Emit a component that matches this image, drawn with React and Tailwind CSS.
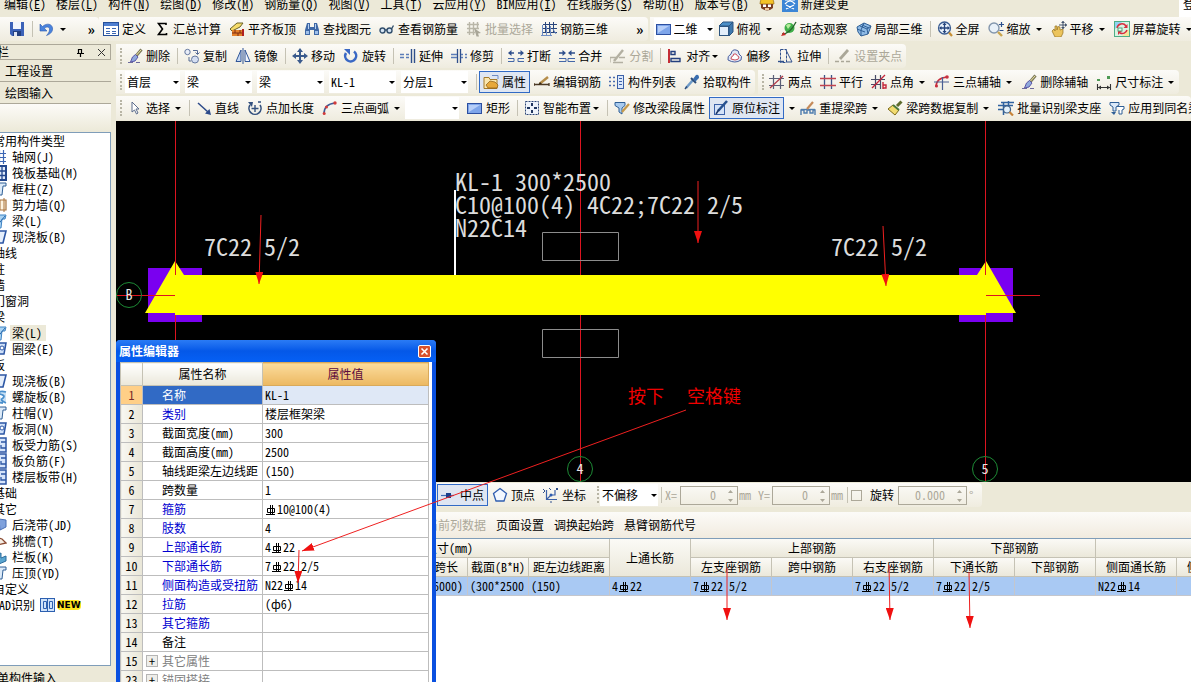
import React from "react";
import clsx from "clsx";

// stroke-only path shorthand used by the icon set
const P = ({ d, c = "#2b4f8f", w = 1, f = "none" }) => (
  <path d={d} stroke={c} strokeWidth={w} fill={f} />
);

const Brush = ({ tip = "#8fa9dc", hair = "#5b55a8" }) => (
  <>
    <P d="M14.5 1.5L9 8" c="#7d7a5c" w={3} />
    <P d="M14 2L9.5 7" c="#efe6a0" />
    <P d="M8.500 6.500L11 9L8 13L3.500 14L5.500 9Z" c={hair} f={tip} />
    <P d="M1 14.500H6M9 14.500H13" c="#6d6a9c" />
  </>
);

const FourArrows = ({ c = "#3a5a8c" }) => (
  <>
    <P d="M8 2V14M2 8H14" c={c} w={2} />
    <path d="M8 0L11 4H5ZM8 16L5 12H11ZM0 8L4 5V11ZM16 8L12 11V5Z" fill={c} />
  </>
);

const ICONS = {
  save: (
    <>
      <path d="M1 1H15V15H3L1 13Z" fill="#3c62b8" />
      <rect x="4" y="1" width="8" height="7" fill="#f3f6fc" />
      <rect x="4" y="10" width="8" height="5" fill="#24407f" />
      <rect x="5" y="11" width="3" height="4" fill="#dfe6f4" />
    </>
  ),
  undo: (
    <>
      <path d="M1 3V10H8L5.500 7.500C8 5 11 6 10.500 9C10.300 11 9 13 7.500 14.500C12 13 14 10 13.500 7C13 3 8 1.500 3.500 5.500Z" fill="#4a83dc" stroke="#2c59b0" strokeWidth=".6" />
    </>
  ),
  define: (
    <>
      <rect x=".5" y="1.500" width="15" height="13" fill="#fff" stroke="#27509a" />
      <rect x="1" y="2" width="14" height="3" fill="#4f7fd0" />
      <P d="M3 7.500H7M3 10.500H7M3 12.500H7M9 7.500H13M9 10.500H13M9 12.500H13" c="#3b66b2" />
    </>
  ),
  sigma: <P d="M12 4V2.500H4.500L8.500 8L4.500 13.500H12.500V12" c="#000" w={1.600} />,
  slab: (
    <>
      <P d="M1 8L8 2H14L11 6L3 10Z" c="#6b6228" f="#f6dc6a" />
      <rect x="3" y="9" width="10" height="6" fill="#e4812b" />
      <P d="M3 12H13M6 9V12M9 12V15M11 9V12" c="#7f2d12" />
      <path d="M13 8H15V15H13Z" fill="#b02020" />
    </>
  ),
  binoculars: (
    <>
      <path d="M3 2H6V6H10V2H13L15 9V14H10V9H6V14H1V9Z" fill="#3f68a6" />
      <path d="M2 10H5V13H2ZM11 10H14V13H11Z" fill="#9fc0ea" />
      <P d="M4.500 3V8M11.500 3V8" c="#b7d0f0" />
    </>
  ),
  glasses: (
    <>
      <circle cx="3.500" cy="9.500" r="2.500" fill="#d7e6f5" stroke="#33506e" strokeWidth="1.400" />
      <circle cx="10.500" cy="9.500" r="2.500" fill="#d7e6f5" stroke="#33506e" strokeWidth="1.400" />
      <P d="M6 9H8M12.500 8L14.500 4.500" c="#33506e" w={1.400} />
    </>
  ),
  batch: (
    <>
      <P d="M1 3.500H13M1 7.500H13M1 11.500H9M3.500 1V14M7.500 1V14M11.500 1V7" c="#b9b6a8" w={1.400} />
      <path d="M8 7L15 12L12 12.500L13 15.500L10.500 15.500Z" fill="#a9a698" />
    </>
  ),
  rebar3d: (
    <>
      <P d="M4.500 1V12M8.500 1V12M12.500 1V12M2 3.500H16M2 7.500H16M2 11.500H16" c="#29457c" />
      <P d="M1.500 4V15M5.500 5V15M9.500 5V15M12 8L15 13M0 14.500H11" c="#6d8cc4" />
    </>
  ),
  rect: (
    <>
      <rect x=".5" y="3.500" width="14" height="10" fill="#7ea5ea" stroke="#2c4fa0" />
      <path d="M2 5H13L2 12Z" fill="#b6cef8" />
    </>
  ),
  cube: (
    <>
      <P d="M1 5L5 1H15L11 5Z" c="#2d5580" f="#4b8fc7" />
      <P d="M11 5L15 1V11L11 15Z" c="#2d5580" f="#3f78ad" />
      <rect x="1.500" y="5.500" width="9" height="9" fill="#e3eefa" stroke="#2d5580" />
    </>
  ),
  orbit: (
    <>
      <circle cx="8.500" cy="7" r="5" fill="#3fae49" />
      <path d="M5 4.500Q8 2 10 4L7 8Z" fill="#b6ec9c" />
      <P d="M1 13Q9 13 15 1" c="#27642d" w={1.300} />
      <path d="M0 15L5 14L2.500 11Z" fill="#c62828" />
    </>
  ),
  local3d: (
    <>
      <P d="M1 6L8 2L15 5L12 13L5 15L2 11Z" c="#2f5f96" f="#8fbbe6" />
      <P d="M4 5L11 8L12 13M8 2L5 9L5 15M1 8L9 11M11 8L15 5M6 4L13 7" c="#2f5f96" />
    </>
  ),
  fullscreen: (
    <>
      <circle cx="7.500" cy="7" r="6" fill="#e8f1fb" stroke="#3a5c92" strokeWidth="1.300" />
      <P d="M7.500 2.500V11.500M3 7H12" c="#25447c" w={1.300} />
      <path d="M7.500 1.500L9.500 4H5.500ZM7.500 12.500L5.500 10H9.500ZM2 7L4.500 5V9ZM13 7L10.500 9V5Z" fill="#25447c" />
      <P d="M12 11.500L15 15" c="#c78f35" w={2.200} />
    </>
  ),
  zoom: (
    <>
      <circle cx="6" cy="7" r="5" fill="#e9f1f8" stroke="#8396ad" strokeWidth="1.400" />
      <P d="M10 11L14 15" c="#c9a54d" w={2.400} />
      <P d="M11 3.500H16M13.500 1V6M11.500 9.500H15.500" c="#2b4f8f" w={1.200} />
    </>
  ),
  pan: (
    <>
      <path d="M1 10L3 8L4 10V5H6V9L7 5.500L9 6V9L12 8V12L10 16H4Z" fill="#ecc45c" stroke="#94701f" strokeWidth=".7" />
      <P d="M12 0V8M8 4H16" c="#44546e" />
      <path d="M12 0L14 2H10ZM12 8L10 6H14ZM16 4L14 6V2Z" fill="#44546e" />
    </>
  ),
  spin: (
    <>
      <rect x=".5" y=".5" width="15" height="15" fill="#d9f3e4" stroke="#4fae86" />
      <path d="M1 1H8L1 8Z" fill="#8fd4f2" />
      <path d="M15 15H8L15 8Z" fill="#f6e59a" />
      <P d="M3 7A5 5 0 0 1 12 5M13 9A5 5 0 0 1 6 12" c="#d82c3c" w={1.500} />
      <path d="M13.500 3V7H9.500ZM4 14V10H8Z" fill="#d82c3c" />
      <rect x="4" y="7" width="4" height="3" fill="#e9faf0" stroke="#55a278" />
    </>
  ),
  brush: <Brush />,
  copy: (
    <>
      <circle cx="3.500" cy="4" r="2.700" fill="#e9eef8" stroke="#65789f" />
      <circle cx="11" cy="11.500" r="3.500" fill="#d5dff2" stroke="#65789f" />
      <P d="M9 2.500H13.500V6M11.500 4.500L13.500 6.500L15.500 4.500M5 9V13H7" c="#556a94" />
    </>
  ),
  mirror: (
    <>
      <P d="M6 2V13.500H1Z" c="#2f5597" f="#c5d8f4" />
      <P d="M10 2V13.500H15Z" c="#2f5597" f="#f0f5fd" />
      <P d="M8 0V16" c="#2f5597" />
    </>
  ),
  move: <FourArrows />,
  rotate: (
    <>
      <P d="M11 3.500A5.500 5.500 0 1 1 3 5" c="#3a68c4" w={2.600} />
      <path d="M1 1H7V7Z" fill="#3a68c4" />
    </>
  ),
  extend: (
    <>
      <P d="M0 6.500H4M0 9.500H4M6 6.500H9M6 9.500H9" c="#5b7cb8" w={1.600} />
      <P d="M11.500 1V15M14.500 1V15" c="#2f4f8c" w={1.400} />
    </>
  ),
  trim: (
    <>
      <P d="M6.500 1V15M9.500 1V15" c="#2f4f8c" w={1.300} />
      <P d="M0 6.500H6M0 9.500H6M10 6.500H12M10 9.500H12M14 6.500H16M14 9.500H16" c="#5b7cb8" w={1.300} />
    </>
  ),
  break: (
    <>
      <P d="M0 10.500H6V13.500H0M16 10.500H10V13.500H16" c="#4467a8" />
      <P d="M1 5H6M15 5H10" c="#2f4f8c" w={1.400} />
      <path d="M0 5L3.500 2V8ZM16 5L12.500 8V2Z" fill="#2f4f8c" />
    </>
  ),
  merge: (
    <>
      <P d="M0 10.500H7V13.500H0M16 10.500H9V13.500H16" c="#4467a8" />
      <P d="M0 5H5M16 5H11" c="#2f4f8c" w={1.400} />
      <path d="M7 5L3.500 8V2ZM9 5L12.500 2V8Z" fill="#2f4f8c" />
    </>
  ),
  split: (
    <>
      <P d="M0 14.500V9.500H6M9 9.500H15M3 14.500H13" c="#b3b0a2" w={1.300} />
      <P d="M4 13L13 2" c="#b3b0a2" w={2.400} />
    </>
  ),
  align: (
    <>
      <P d="M2 1V15" c="#c42e36" w={2} />
      <P d="M4 3.500H8V6.500H4ZM4 10.500H13V13.500H4Z" c="#24407f" w={1.400} />
    </>
  ),
  offset: (
    <>
      <P d="M1 12Q0 8 4 6Q5 1 9 2Q12 2 12 6Q16 8 14 12Q8 16 1 12Z" c="#4a5f9f" f="#dfe6f5" />
      <P d="M4 11Q4 8 6 8Q6 5 9 6Q10 8 12 9Q12 12 8 12Z" c="#cc5060" f="#fff" />
    </>
  ),
  stretch: (
    <>
      <path d="M2.500 1.500H8.500V14.500H2.500Z" fill="none" stroke="#2f4f8c" strokeDasharray="3 1" />
      <P d="M8 2L14 14H9" c="#2f4f8c" />
      <P d="M0 13.500H6" c="#2f4f8c" w={1.400} />
    </>
  ),
  grips: (
    <>
      <P d="M5 11L13 2" c="#aaa798" w={2.800} />
      <P d="M0 13.500H4M6 13.500H9M11 13.500H15" c="#aaa798" w={1.600} />
    </>
  ),
  props: (
    <>
      <P d="M1 3.500H6L7 5.500H14V14.500H1Z" c="#a57a2a" f="#fbe7ae" />
      <path d="M3 11L7 7L12 8L15 11L14 14H5Z" fill="#e7a83a" stroke="#8a5a14" strokeWidth=".7" />
      <P d="M9 1.500H15V5" c="#6f8cc4" />
    </>
  ),
  editbar: (
    <>
      <P d="M0 10.500H15M0 12V9M15 12V9" c="#4b3924" w={1.300} />
      <P d="M6 9.500L14 3" c="#b58d4a" w={2.400} />
      <path d="M4 11L6 8L8 10Z" fill="#3b2a14" />
    </>
  ),
  list: (
    <>
      <P d="M0 3.500H2M4 3.500H6M0 7.500H2M4 7.500H6M0 11.500H2M4 11.500H6" c="#4a6caf" w={1.600} />
      <rect x="8.500" y="1.500" width="6" height="13" fill="#dbe8fb" stroke="#3c61a8" />
      <P d="M10 4.500H13M10 7.500H13M10 10.500H13" c="#3c61a8" />
    </>
  ),
  dropper: (
    <>
      <P d="M2 14L9 6" c="#6f9bc8" w={2.600} />
      <P d="M1 15L3 12.500" c="#2c4c79" w={1.400} />
      <P d="M7 4L12 9" c="#2c4c79" w={2} />
      <path d="M9 5L12 1Q15 0 15 4L11.500 7.500Z" fill="#3a6eaf" />
    </>
  ),
  axes2: (
    <>
      <P d="M4.500 1V15M11.500 1V15M0 4.500H15M0 11.500H15" c="#5a5f77" w={1.200} />
      <P d="M1 14L14 2" c="#b23a48" w={1.200} />
    </>
  ),
  parallel: (
    <>
      <P d="M4.500 1V15M11.500 1V15" c="#3b5488" w={1.300} />
      <P d="M0 4.500H16M0 11.500H16" c="#c24450" w={1.300} />
    </>
  ),
  ptangle: (
    <>
      <P d="M4.500 1V15M9.500 1V15M0 5.500H14M0 10.500H10" c="#474b66" w={1.200} />
      <P d="M1 14L14 1M12 8V15M12 11H15V14H12" c="#c4253a" w={1.400} />
    </>
  ),
  arcaxis: (
    <>
      <P d="M2 13Q2 4 13 3" c="#c9303f" w={1.600} />
      <P d="M0 8H15M8.500 3V16" c="#4a5f93" w={1.200} />
      <circle cx="13" cy="3" r="1.800" fill="#c9303f" />
      <circle cx="2.500" cy="12" r="1.500" fill="#c9303f" />
    </>
  ),
  dim: (
    <>
      <P d="M1.500 10V16M14.500 10V16M2 13.500H14" c="#333" w={1.100} />
      <path d="M2 13.500L5 11.500V15.500ZM14 13.500L11 15.500V11.500Z" fill="#333" />
      <path d="M1 5H4V7H1ZM11 2H14V5H11Z" fill="#4e9a54" />
    </>
  ),
  cursor: <P d="M5 2L12 9L9 9L11 13L9.500 14L7.500 10L5 12Z" c="#5c6d8c" f="#fff" />,
  line: (
    <>
      <P d="M2 3L12 12" c="#2c4a8a" w={1.500} />
      <path d="M15 15L9 13.500L13.500 9Z" fill="#2c4a8a" />
    </>
  ),
  addlen: (
    <>
      <P d="M3 5A6 6 0 1 0 13 5" c="#33507e" w={1.600} />
      <path d="M1 2L6 2L5 7Z" fill="#33507e" />
      <P d="M8 5V12M4.500 8.500H11.500M11 2H14" c="#33507e" w={1.400} />
    </>
  ),
  arc: (
    <>
      <P d="M2 14Q2 4 13 3" c="#3d5a96" w={1.600} />
      <circle cx="13" cy="3" r="1.700" fill="#d23c3c" />
      <circle cx="4.500" cy="7" r="1.500" fill="#d23c3c" />
      <circle cx="2.200" cy="13.500" r="1.500" fill="#d23c3c" />
    </>
  ),
  smart: (
    <>
      <rect x="1.500" y="1.500" width="13" height="13" fill="#eef3fb" stroke="#2d4678" strokeDasharray="2 1" />
      <path d="M7 3H9V6H7ZM7 10H9V13H7ZM3 7H6V9H3ZM10 7H13V9H10Z" fill="#1f355f" />
    </>
  ),
  editseg: (
    <>
      <P d="M1 2.500H11V5.500L8 8V14L5 12V8L1 5.500Z" c="#2f5f96" f="#a9cbee" />
      <P d="M8 12L15 4" c="#c59a4c" w={2.200} />
    </>
  ),
  annotate: (
    <>
      <rect x="1.500" y="4.500" width="10" height="10" fill="#d4e2f8" stroke="#3c61a8" />
      <P d="M5 11L14 1" c="#27518f" w={2.600} />
      <P d="M3 14L6 9.500" c="#1f3866" w={1.500} />
    </>
  ),
  respan: (
    <>
      <P d="M1 15V10H4V13H7V10H10V13H13V10H15V15" c="#4f7dae" w={1.400} />
      <P d="M1 9.500H15" c="#4f7dae" w={1.400} />
      <P d="M7 9L13 2" c="#c58a5a" w={2.200} />
    </>
  ),
  goldbrush: (
    <>
      <P d="M14.500 1.500L10 6" c="#5f6c2d" w={3} />
      <P d="M6 5L12 10L8 15L1 9Z" c="#7d6a18" f="#f3dc70" />
      <P d="M6 5L12 10" c="#4c7a3b" w={2} />
    </>
  ),
  identify: (
    <>
      <P d="M0 5.500H15M3 2.500H16M0 9.500H7M5.500 2V15M10.500 1V6" c="#2f62a0" w={1.500} />
      <circle cx="9" cy="9.500" r="3.500" fill="#e3f1fb" stroke="#3c5f88" strokeWidth="1.200" />
      <P d="M11.500 12L15 15.500" c="#c78338" w={2.200} />
    </>
  ),
  apply: (
    <>
      <P d="M1 2.500H10V5L7 7V11H4V7L1 5Z" c="#2f5f96" f="#dbe9f8" />
      <P d="M8 6.500H15V9L13 10V14H10V10" c="#2f5f96" f="#fff" />
      <path d="M2 12L7 12L5 15Z" fill="#2f5f96" />
    </>
  ),
  mid: (
    <>
      <P d="M0 8.500H13" c="#3d6bb5" w={1.200} />
      <rect x="5" y="6" width="5" height="5" fill="#1b3f8b" />
    </>
  ),
  vertex: <P d="M8 1.500L14.500 6.500L12 14H4L1.500 6.500Z" c="#2f5db0" w={1.300} f="#f3f8ff" />,
  coord: (
    <>
      <P d="M3.500 3V12.500H14M4 12L8 8H12V3" c="#3c61a8" w={1.200} />
      <P d="M0 2L2 4L0 6M6 1L8 3M13 1L15 3M15 1L13 3M7 15H9" c="#2f4f8c" />
      <circle cx="8" cy="8" r="1.500" fill="#2f5db0" />
    </>
  ),
  helmet: (
    <>
      <path d="M1 8Q1 1 8 1Q15 1 15 8Z" fill="#f4c228" stroke="#9a6b12" strokeWidth=".7" />
      <path d="M2 8H14V12Q8 17 2 12Z" fill="#7b3e22" />
      <path d="M4 8.500H7V11H4ZM9 8.500H12V11H9Z" fill="#fff" />
      <path d="M6 12H10V14H6Z" fill="#f3c9a0" />
    </>
  ),
  change: (
    <>
      <rect width="16" height="16" fill="#3c86d6" />
      <P d="M3 4H13M3 8Q8 2 13 8M4 13L12 9M4 9L12 13M8 2V4" c="#fff" w={1.200} />
    </>
  ),
  grid: <P d="M3.500 1V15M8.500 1V15M12.500 1V15M0 4.500H15M0 8.500H15M0 12.500H15" c="#3c66b4" w={1.200} />,
  raft: (
    <>
      <rect x="1" y="1" width="14" height="14" fill="#dfeafa" stroke="#24478c" strokeWidth="2" />
      <P d="M1 6H15M1 10.500H15M6 1V15M11 1V15" c="#24478c" w={1.300} />
    </>
  ),
  column: <P d="M2 2H15V5H12L11 14H7V6H2Z" c="#2f5f96" f="#dceaf8" />,
  wall: (
    <>
      <P d="M1 3H15V13H1Z" c="#a8733c" f="#fdf3e0" w={1.200} />
      <P d="M13 1V15M9 3V13" c="#a8733c" />
    </>
  ),
  beam: (
    <>
      <P d="M1 2H15L14 6H11L10 15H4Z" c="#3d83c4" f="#a9d2f2" />
      <P d="M5 14L14 3" c="#2e6dae" />
    </>
  ),
  plate: <P d="M2 2H15L12 14H1Z" c="#2c56a4" w={1.600} f="#e6effb" />,
  spiral: <P d="M15 3Q8 1 8 5Q15 6 12 9Q8 11 15 14M8 5L4 13L12 14" c="#4a8fcc" w={1.800} f="#c9e1f5" />,
  ring: (
    <>
      <P d="M3 2H15L13 13H1Z" c="#2c56a4" w={1.500} f="#cfe0f8" />
      <circle cx="11" cy="7" r="2" fill="#fff" stroke="#2c56a4" />
    </>
  ),
  band: (
    <>
      <rect x="1" y="1" width="14" height="14" fill="#d6e4fa" stroke="#2c56a4" strokeWidth="1.500" />
      <P d="M10 5H15M10 8V11H15" c="#2c56a4" w={1.300} />
    </>
  ),
  strip: <P d="M8 2L15 3V10L9 13Z" c="#4a6fb4" f="#7fa1dc" />,
  eave: <P d="M4 4L11 6L15 10L6 12" c="#8a4a32" w={1.300} f="#f4ede4" />,
  rail: <P d="M5 6L10 4V9L15 7V12L8 15Z" c="#2b6c9e" f="#5ba5cf" />,
  book: (
    <>
      <rect x=".5" y="1.500" width="14" height="13" fill="#cfe2fa" stroke="#2c5fb0" />
      <P d="M3.500 4.500H6.500V11.500H3.500ZM9.500 4.500H12.500V11.500H9.500ZM7.500 2V14" c="#2c5fb0" />
    </>
  ),
};

const Ico = ({ name }) => (
  <svg viewBox="0 0 16 16" className="h-4 w-4 shrink-0" aria-hidden="true">
    {ICONS[name]}
  </svg>
);

const Caret = ({ tight }) => (
  <svg
    viewBox={tight ? "3 0 9 16" : "0 0 12 16"}
    className={clsx("h-4 shrink-0", tight ? "w-[9px]" : "w-3")}
    aria-hidden="true"
  >
    <path d="M5 7H11L8 10Z" fill="#000" />
  </svg>
);

const Sep = () => <span className="ml-[3px] mr-[2px] h-4 w-px shrink-0 bg-[#c5c2b4]" />;

const Grip = () => (
  <span className="ml-1 mr-px h-4 w-[2px] shrink-0 border-l-2 border-dotted border-[#b8b5a5]" />
);

const More = () => <span className="text-[14px] leading-4 font-bold">»</span>;

const Tool = ({ icon, label, caret, active, disabled }) => (
  <button
    type="button"
    disabled={disabled}
    className={clsx(
      "flex h-[22px] shrink-0 items-center gap-[3px] border px-[3px]",
      active ? "border-[#316ac5] bg-[#dfe6f2]" : "border-transparent",
      disabled ? "text-[#aca899]" : "text-black"
    )}
  >
    <Ico name={icon} />
    <span className="flex items-center">
      {label}
      {caret && <Caret tight={caret === "tight"} />}
    </span>
  </button>
);

const Combo = ({ value, label, width, icon }) => (
  <div className={clsx("flex h-[22px] shrink-0 items-center gap-[2px] bg-white pl-[2px]", width)}>
    {icon && <Ico name={icon} />}
    <select aria-label={label} defaultValue={value} className="min-w-0 flex-1 appearance-none bg-transparent outline-none">
      <option>{value}</option>
    </select>
    <Caret tight />
  </div>
);

const Strip = ({ children, className }) => (
  <div
    className={clsx(
      "flex h-6 shrink-0 items-center rounded-r-sm bg-linear-to-b from-[#fcfbf8] to-[#efecdf]",
      className
    )}
  >
    {children}
  </div>
);

const MENUS = [
  ["编辑", "E"], ["楼层", "L"], ["构件", "N"], ["绘图", "D"], ["修改", "M"], ["钢筋量", "Q"], ["视图", "V"],
  ["工具", "T"], ["云应用", "Y"], ["BIM应用", "I"], ["在线服务", "S"], ["帮助", "H"], ["版本号", "B"],
];

const MenuBar = () => (
  <nav className="flex h-[17px] shrink-0 items-end gap-[10px] overflow-hidden pl-1">
    {MENUS.map(([name, key]) => (
      <button key={key} type="button" className="h-[26px] shrink-0 leading-4">
        {name}(<u>{key}</u>)
      </button>
    ))}
    <div className="flex h-[26px] shrink-0 items-center gap-[7px]">
      <Ico name="helmet" />
      <button type="button" className="flex items-center gap-[3px] leading-4">
        <Ico name="change" />
        新建变更
      </button>
    </div>
    <button type="button" className="-mr-5 ml-auto h-[26px] shrink-0 bg-white px-1 leading-4">登录</button>
  </nav>
);

const MainToolbar = () => (
  <div className="flex h-[26px] shrink-0 items-start overflow-hidden">
    <Strip className="w-[99px] pl-[5px]">
      <button type="button" aria-label="保存" className="px-1"><Ico name="save" /></button>
      <Sep />
      <button type="button" aria-label="撤销" className="flex items-center px-1"><Ico name="undo" /><Caret /></button>
      <span className="ml-auto pr-1"><More /></span>
    </Strip>
    <Strip>
      <Tool icon="define" label="定义" />
      <Tool icon="sigma" label="汇总计算" />
      <Tool icon="slab" label="平齐板顶" />
      <Tool icon="binoculars" label="查找图元" />
      <Tool icon="glasses" label="查看钢筋量" />
      <Tool icon="batch" label="批量选择" disabled />
      <Tool icon="rebar3d" label="钢筋三维" />
      <span className="pr-1 pl-6"><More /></span>
    </Strip>
    <Strip className="ml-[2px] pl-1">
      <Combo icon="rect" value="二维" label="视图模式" width="w-[60px]" />
      <Tool icon="cube" label="俯视" caret />
      <Tool icon="orbit" label="动态观察" />
      <Tool icon="local3d" label="局部三维" />
      <Sep />
      <Tool icon="fullscreen" label="全屏" />
      <Tool icon="zoom" label="缩放" caret />
      <Tool icon="pan" label="平移" caret />
      <Tool icon="spin" label="屏幕旋转" caret />
    </Strip>
  </div>
);

const EditToolbars = () => (
  <div className="flex shrink-0 flex-col items-start gap-[2px] py-px">
    <Strip>
      <Grip />
      <Tool icon="brush" label="删除" />
      <Sep />
      <Tool icon="copy" label="复制" />
      <Tool icon="mirror" label="镜像" />
      <Sep />
      <Tool icon="move" label="移动" />
      <Tool icon="rotate" label="旋转" />
      <Sep />
      <Tool icon="extend" label="延伸" />
      <Tool icon="trim" label="修剪" />
      <Sep />
      <Tool icon="break" label="打断" />
      <Tool icon="merge" label="合并" />
      <Tool icon="split" label="分割" disabled />
      <Sep />
      <Tool icon="align" label="对齐" caret="tight" />
      <Tool icon="offset" label="偏移" />
      <Tool icon="stretch" label="拉伸" />
      <Sep />
      <Tool icon="grips" label="设置夹点" disabled />
    </Strip>
    <div className="flex gap-[3px]">
      <Strip>
        <Grip />
        <div className="flex gap-[5px] px-[5px] pl-[2px]">
          <Combo value="首层" label="楼层" width="w-[55px]" />
          <Combo value="梁" label="构件大类" width="w-[67px]" />
          <Combo value="梁" label="构件类型" width="w-[67px]" />
          <Combo value="KL-1" label="构件" width="w-[67px]" />
          <Combo value="分层1" label="分层" width="w-[67px]" />
        </div>
        <Sep />
        <Tool icon="props" label="属性" active />
        <Tool icon="editbar" label="编辑钢筋" />
        <Tool icon="list" label="构件列表" />
        <Tool icon="dropper" label="拾取构件" />
      </Strip>
      <Strip>
        <Grip />
        <Tool icon="axes2" label="两点" />
        <Tool icon="parallel" label="平行" />
        <Tool icon="ptangle" label="点角" caret />
        <Tool icon="arcaxis" label="三点辅轴" caret />
        <Tool icon="brush" label="删除辅轴" />
        <Tool icon="dim" label="尺寸标注" caret />
      </Strip>
    </div>
    <Strip>
      <Grip />
      <Tool icon="cursor" label="选择" caret />
      <Sep />
      <Tool icon="line" label="直线" />
      <Tool icon="addlen" label="点加长度" />
      <Tool icon="arc" label="三点画弧" caret />
      <div className="pr-1">
        <Combo value="" label="弧类型" width="w-[54px]" />
      </div>
      <Tool icon="rect" label="矩形" />
      <Sep />
      <Tool icon="smart" label="智能布置" caret="tight" />
      <Sep />
      <Tool icon="editseg" label="修改梁段属性" />
      <Tool icon="annotate" label="原位标注" active />
      <Caret />
      <Tool icon="respan" label="重提梁跨" caret />
      <Tool icon="goldbrush" label="梁跨数据复制" caret />
      <Tool icon="identify" label="批量识别梁支座" />
      <Tool icon="apply" label="应用到同名梁" />
    </Strip>
  </div>
);

const TREE = [
  { label: "常用构件类型" },
  { label: "轴网(J)", icon: "grid" },
  { label: "筏板基础(M)", icon: "raft" },
  { label: "框柱(Z)", icon: "column" },
  { label: "剪力墙(Q)", icon: "wall" },
  { label: "梁(L)", icon: "beam" },
  { label: "现浇板(B)", icon: "plate" },
  { label: "轴线" },
  { label: "柱" },
  { label: "墙" },
  { label: "门窗洞" },
  { label: "梁" },
  { label: "梁(L)", icon: "beam", selected: true },
  { label: "圈梁(E)", icon: "ring" },
  { label: "板" },
  { label: "现浇板(B)", icon: "plate" },
  { label: "螺旋板(B)", icon: "spiral" },
  { label: "柱帽(V)", icon: "column" },
  { label: "板洞(N)", icon: "ring" },
  { label: "板受力筋(S)", icon: "band" },
  { label: "板负筋(F)", icon: "band" },
  { label: "楼层板带(H)", icon: "band" },
  { label: "基础" },
  { label: "其它" },
  { label: "后浇带(JD)", icon: "strip" },
  { label: "挑檐(T)", icon: "eave" },
  { label: "栏板(K)", icon: "rail" },
  { label: "压顶(YD)", icon: "column" },
  { label: "自定义" },
  { label: "CAD识别", isNew: true },
];

const PanelButton = ({ children }) => (
  <button type="button" className="flex h-[22px] shrink-0 items-center border-b border-[#aca899] bg-[#ece9d8] pl-[5px]">
    {children}
  </button>
);

const Sidebar = () => (
  <aside className="flex w-[111px] shrink-0 flex-col overflow-hidden">
    <div className="mt-px flex h-4 shrink-0 items-center border border-[#aca899]">
      <span className="-ml-1 flex-1">栏</span>
      <svg viewBox="0 0 9 9" className="mr-3 h-[9px] w-[9px]" aria-hidden="true">
        <P d="M2.500 1V5.500M1 5.500H8M2.500 1.500H6M5.500 1V5.500M4.500 6V9" c="#000" w={1.200} />
      </svg>
      <svg viewBox="0 0 9 9" className="mr-1 h-[9px] w-[9px]" aria-hidden="true">
        <P d="M1 1L8 8M8 1L1 8" c="#333" />
      </svg>
    </div>
    <PanelButton>工程设置</PanelButton>
    <PanelButton>绘图输入</PanelButton>
    <div className="h-7 shrink-0 bg-linear-to-b from-[#fcfbf8] to-[#ece9d8]" />
    <ul className="flex-1 border-t border-r border-b border-[#7f9db9] bg-white">
      {TREE.map((node, i) => (
        <li key={i} className="-ml-[9px] flex h-4 items-center gap-[3px]">
          {node.icon && <Ico name={node.icon} />}
          <span className={clsx("px-[2px] leading-4 whitespace-nowrap", node.selected && "bg-[#ece9d8] pr-1")}>
            {node.label}
          </span>
          {node.isNew && (
            <>
              <Ico name="book" />
              <span className="-ml-[2px] rounded-sm bg-[#ffe620] font-['DejaVu_Sans',sans-serif] text-[9px] leading-[10px] font-bold">
                NEW
              </span>
            </>
          )}
        </li>
      ))}
    </ul>
    <div className="h-4 shrink-0">
      <button type="button" className="-ml-[3px] mt-1 leading-4">单构件输入</button>
    </div>
  </aside>
);

const AxisMark = ({ x, y, children }) => (
  <g>
    <circle cx={x} cy={y} r="12.500" fill="none" stroke="#1d8a35" />
    <text x={x} y={y + 5} textAnchor="middle" fontSize="14" fill="#e6e6e6">{children}</text>
  </g>
);

// drawn in window coordinates, shifted to the view's own origin
const BeamView = () => (
  <div className="min-h-0 flex-1 overflow-hidden bg-black">
    <svg className="block h-full w-full" role="img" aria-label="KL-1">
      <g transform="translate(-116 -121)">
        <path d="M148 268H202V322H148ZM959 268H1013V322H959Z" fill="#7a00f0" />
        <path d="M175.500 121V482M580.500 121V482M985.500 121V482" stroke="#dc1420" />
        <path d="M175 261L184 275H977L986 261L1016 313H986V315H175V313H145Z" fill="#ffff00" />
        <path d="M175.500 261V275M985.500 261V275M116 295.500H175M986 295.500H1040" stroke="#dc1420" />
        <path d="M542.500 232.500H618.500V260.500H542.500ZM542.500 329.500H618.500V357.500H542.500Z" fill="none" stroke="#8c8c8c" />
        <path d="M455 190V275" stroke="#fff" strokeWidth="2" />
        <g fill="#dcdcdc" fontSize="24" className="whitespace-pre">
          <text x="455" y="191">KL-1 300*2500</text>
          <text x="455" y="214">C10@100(4) 4C22;7C22 2/5</text>
          <text x="455" y="237">N22C14</text>
          <text x="204" y="256">7C22 5/2</text>
          <text x="831" y="256">7C22 5/2</text>
        </g>
        <AxisMark x={129} y={295}>B</AxisMark>
        <AxisMark x={580} y={469}>4</AxisMark>
        <AxisMark x={985} y={469}>5</AxisMark>
        <g fill="#f00000" fontSize="18" fontWeight="300">
          <text x="628" y="403">按下</text>
          <text x="687" y="403">空格键</text>
        </g>
      </g>
    </svg>
  </div>
);

// HRB400 bar sign
const Bar = () => (
  <svg viewBox="0 0 12 12" className="inline-block h-3 w-3 align-[-2px]" role="img" aria-label="三级钢">
    <path d="M2.500 4.500H9.500V8.500H2.500ZM5.500 1V11M7.500 1V11M1 10.500H10" fill="none" stroke="#000" />
  </svg>
);

const PROPERTIES = [
  { no: 1, name: "名称", value: "KL-1" },
  { no: 2, name: "类别", value: "楼层框架梁", tone: "link" },
  { no: 3, name: "截面宽度(mm)", value: "300" },
  { no: 4, name: "截面高度(mm)", value: "2500" },
  { no: 5, name: "轴线距梁左边线距", value: "(150)" },
  { no: 6, name: "跨数量", value: "1" },
  { no: 7, name: "箍筋", value: <><Bar />10@100(4)</>, tone: "link" },
  { no: 8, name: "肢数", value: "4", tone: "link" },
  { no: 9, name: "上部通长筋", value: <>4<Bar />22</>, tone: "link" },
  { no: 10, name: "下部通长筋", value: <>7<Bar />22 2/5</>, tone: "link" },
  { no: 11, name: "侧面构造或受扭筋", value: <>N22<Bar />14</>, tone: "link" },
  { no: 12, name: "拉筋", value: "(ф6)", tone: "link" },
  { no: 13, name: "其它箍筋", value: "", tone: "link" },
  { no: 14, name: "备注", value: "" },
  { no: 15, name: "其它属性", value: "", tone: "group" },
  { no: 23, name: "锚固搭接", value: "", tone: "group" },
];

const PropertyWindow = () => (
  <section className="absolute top-[297px] bottom-0 left-0 z-10 flex w-[320px] flex-col overflow-hidden rounded-t-sm bg-[#0a50e0]">
    <header className="flex h-[22px] shrink-0 items-center justify-between bg-linear-to-b from-[#2a7bf5] via-[#0458e8] to-[#0560f5] pr-[5px] pl-[3px]">
      <h2 className="font-bold text-white">属性编辑器</h2>
      <button type="button" aria-label="关闭" className="flex h-[13px] w-[13px] items-center justify-center rounded-[2px] border border-white bg-[#d9512c]">
        <svg viewBox="0 0 9 9" className="h-[9px] w-[9px]" aria-hidden="true">
          <P d="M1.500 1.500L7.500 7.500M7.500 1.500L1.500 7.500" c="#fff" w={1.600} />
        </svg>
      </button>
    </header>
    <div className="mx-1 bg-white pr-[3px]">
      <table className="w-full table-fixed border-collapse">
        <colgroup>
          <col className="w-[22px]" />
          <col className="w-[120px]" />
          <col />
        </colgroup>
        <thead>
          <tr className="h-[23px]">
            <th className="border border-[#c5c2b4] bg-linear-to-b from-white to-[#ebe8da]" />
            <th className="border border-[#c5c2b4] bg-linear-to-b from-white to-[#ebe8da] font-normal">属性名称</th>
            <th className="border border-[#d9a95a] bg-linear-to-b from-[#fbdc9c] to-[#ecb860] font-normal text-[#5c0a3c]">属性值</th>
          </tr>
        </thead>
        <tbody>
          {PROPERTIES.map(({ no, name, value, tone }) => (
            <tr key={no} className="h-[19px]">
              <td className={clsx("border border-[#bdbdbd] p-0 text-center leading-4", no === 1 ? "bg-[#ffcf87] text-[#7a2a2a]" : "bg-linear-to-r from-[#f8f7f1] to-[#e9e6d7]")}>
                {no}
              </td>
              <td
                className={clsx(
                  "overflow-hidden border border-[#bdbdbd] p-0 leading-4 whitespace-nowrap",
                  no === 1 && "bg-[#316ac5] text-white",
                  tone === "link" && "text-[#0000d0]",
                  tone === "group" && "text-[#808080]"
                )}
              >
                <span className="flex items-center">
                  <span className="flex w-[19px] shrink-0 pl-[3px]">
                    {tone === "group" && (
                      <button type="button" aria-label={`展开${name}`} className="flex h-[12px] w-[12px] items-center justify-center border border-[#b5b5b5] bg-[#eeeeea] leading-[10px] text-black">
                        +
                      </button>
                    )}
                  </span>
                  {name}
                </span>
              </td>
              <td className={clsx("border border-[#bdbdbd] py-0 pr-0 pl-[2px] leading-4 whitespace-nowrap", no === 1 && "bg-[#dfe8f6]")}>
                {value}
              </td>
            </tr>
          ))}
        </tbody>
      </table>
    </div>
  </section>
);

const Spin = ({ id, value, width }) => (
  <div className={clsx("flex h-[19px] shrink-0 items-center border border-[#aca899] text-[#aca899]", width)}>
    <input id={id} disabled defaultValue={value} className="min-w-0 flex-1 bg-transparent pr-[10px] text-right" />
    <svg viewBox="0 0 9 15" className="mr-[2px] h-[15px] w-[9px] shrink-0" aria-hidden="true">
      <path d="M2 5L4.500 2L7 5ZM2 11L4.500 14L7 11Z" fill="#aca899" />
    </svg>
  </div>
);

const SnapBar = () => (
  <div className="flex h-[30px] shrink-0 pt-px pl-[321px]">
    <Strip>
      <Tool icon="mid" label="中点" active />
      <Tool icon="vertex" label="顶点" />
      <Tool icon="coord" label="坐标" />
      <span className="pl-[3px]"><Grip /></span>
      <Combo value="不偏移" label="偏移方式" width="w-[58px]" />
      <Sep />
      <label htmlFor="dx" className="shrink-0 pr-[3px] pl-px text-[#aca899]">X=</label>
      <Spin id="dx" value="0" width="w-[58px]" />
      <span className="w-5 shrink-0 pl-px text-[#aca899]">mm</span>
      <label htmlFor="dy" className="shrink-0 pr-[2px] text-[#aca899]">Y=</label>
      <Spin id="dy" value="0" width="w-[58px]" />
      <span className="shrink-0 px-px text-[#aca899]">mm</span>
      <Sep />
      <input id="rot" type="checkbox" className="mr-2 ml-px h-[11px] w-[11px] shrink-0 appearance-none border border-[#aca899]" />
      <label htmlFor="rot" className="shrink-0 pr-1">旋转</label>
      <Spin id="angle" value="0.000" width="w-[69px]" />
      <label htmlFor="angle" className="shrink-0 pr-2 pl-[2px] text-[#aca899]">°</label>
    </Strip>
  </div>
);

const HEAD = "border-r border-b border-[#c5c2b4] bg-linear-to-b from-[#fbfaf6] to-[#ebe8da] p-0 font-normal whitespace-nowrap overflow-hidden";

const SPAN_COLS = [
  { head: "跨长", cell: "(6000)" },
  { head: "截面(B*H)", cell: "(300*2500" },
  { head: "距左边线距离", cell: "(150)" },
];

const BAR_COLS = [
  { head: "左支座钢筋", cell: <>7<Bar />22 5/2</> },
  { head: "跨中钢筋", cell: "" },
  { head: "右支座钢筋", cell: <>7<Bar />22 5/2</> },
  { head: "下通长筋", cell: <>7<Bar />22 2/5</> },
  { head: "下部钢筋", cell: "" },
  { head: "侧面通长筋", cell: <>N22<Bar />14</> },
  { head: "侧面原位筋", cell: "" },
];

const SpanTable = () => (
  <div className="flex-1 overflow-hidden border-t border-[#7f9db9] bg-white">
    <table className="w-[1142px] table-fixed border-separate border-spacing-0">
      <colgroup>
        <col className="w-[149px]" />
        <col className="w-[160px]" />
        <col className="w-[43px]" />
        <col className="w-[61px]" />
        <col className="w-[81px]" />
        <col className="w-[81px]" />
        {BAR_COLS.map((col) => <col key={col.head} className="w-[81px]" />)}
      </colgroup>
      <thead className="leading-4">
        <tr className="h-[19px]">
          <th rowSpan={2} className={HEAD} />
          <th colSpan={4} className={HEAD}>构件尺寸(mm)</th>
          <th rowSpan={2} className={HEAD}>上通长筋</th>
          <th colSpan={3} className={HEAD}>上部钢筋</th>
          <th colSpan={2} className={HEAD}>下部钢筋</th>
          <th colSpan={2} className={HEAD} />
        </tr>
        <tr className="h-[19px]">
          <th className={HEAD} />
          {SPAN_COLS.map((col) => <th key={col.head} className={HEAD}>{col.head}</th>)}
          {BAR_COLS.map((col) => <th key={col.head} className={HEAD}>{col.head}</th>)}
        </tr>
      </thead>
      <tbody>
        <tr className="h-[19px] bg-[#a9c9f3] *:overflow-hidden *:border-r *:border-b *:border-[#c4c6cc] *:py-0 *:pr-0 *:pl-[2px] *:leading-4 *:whitespace-nowrap">
          <td />
          <td />
          {SPAN_COLS.map((col) => <td key={col.head}>{col.cell}</td>)}
          <td>4<Bar />22</td>
          {BAR_COLS.map((col) => <td key={col.head}>{col.cell}</td>)}
        </tr>
      </tbody>
    </table>
  </div>
);

const BottomPanel = () => (
  <div className="flex h-[200px] shrink-0 flex-col">
    <SnapBar />
    <div className="flex h-[26px] shrink-0 items-center gap-[10px] bg-linear-to-b from-[#fcfbf8] to-[#f1ebdf] pl-[310px]">
      <button type="button" disabled className="text-[#aca899]">当前列数据</button>
      <button type="button">页面设置</button>
      <button type="button">调换起始跨</button>
      <button type="button">悬臂钢筋代号</button>
    </div>
    <SpanTable />
  </div>
);

const ARROWS = [
  [261, 215, 259, 284],
  [698, 181, 698, 243],
  [883, 226, 886, 286],
  [686, 410, 302, 551],
  [299, 550, 298, 583],
  [727, 568, 727, 620],
  [889, 565, 890, 620],
  [969, 572, 970, 628],
];

const Annotations = () => (
  <svg className="pointer-events-none absolute inset-0 z-20 h-full w-full" aria-hidden="true">
    <defs>
      <marker id="head" markerUnits="userSpaceOnUse" markerWidth="12" markerHeight="8" refX="12" refY="4" orient="auto">
        <path d="M0 0L12 4L0 8Z" fill="#f01010" />
      </marker>
    </defs>
    {ARROWS.map(([x1, y1, x2, y2], i) => (
      <line key={i} x1={x1} y1={y1} x2={x2} y2={y2} stroke="#ee2020" markerEnd="url(#head)" />
    ))}
  </svg>
);

export default function App() {
  return (
    <div className="relative flex h-screen flex-col overflow-hidden bg-[#ece9d8] font-['Noto_Sans_Mono_CJK_SC','Noto_Sans_CJK_SC',sans-serif] text-[12px] leading-4 text-black">
      <MenuBar />
      <MainToolbar />
      <div className="flex min-h-0 flex-1">
        <Sidebar />
        <main className="relative ml-[5px] flex min-w-0 flex-1 flex-col overflow-hidden">
          <EditToolbars />
          <BeamView />
          <BottomPanel />
          <PropertyWindow />
        </main>
      </div>
      <Annotations />
    </div>
  );
}
